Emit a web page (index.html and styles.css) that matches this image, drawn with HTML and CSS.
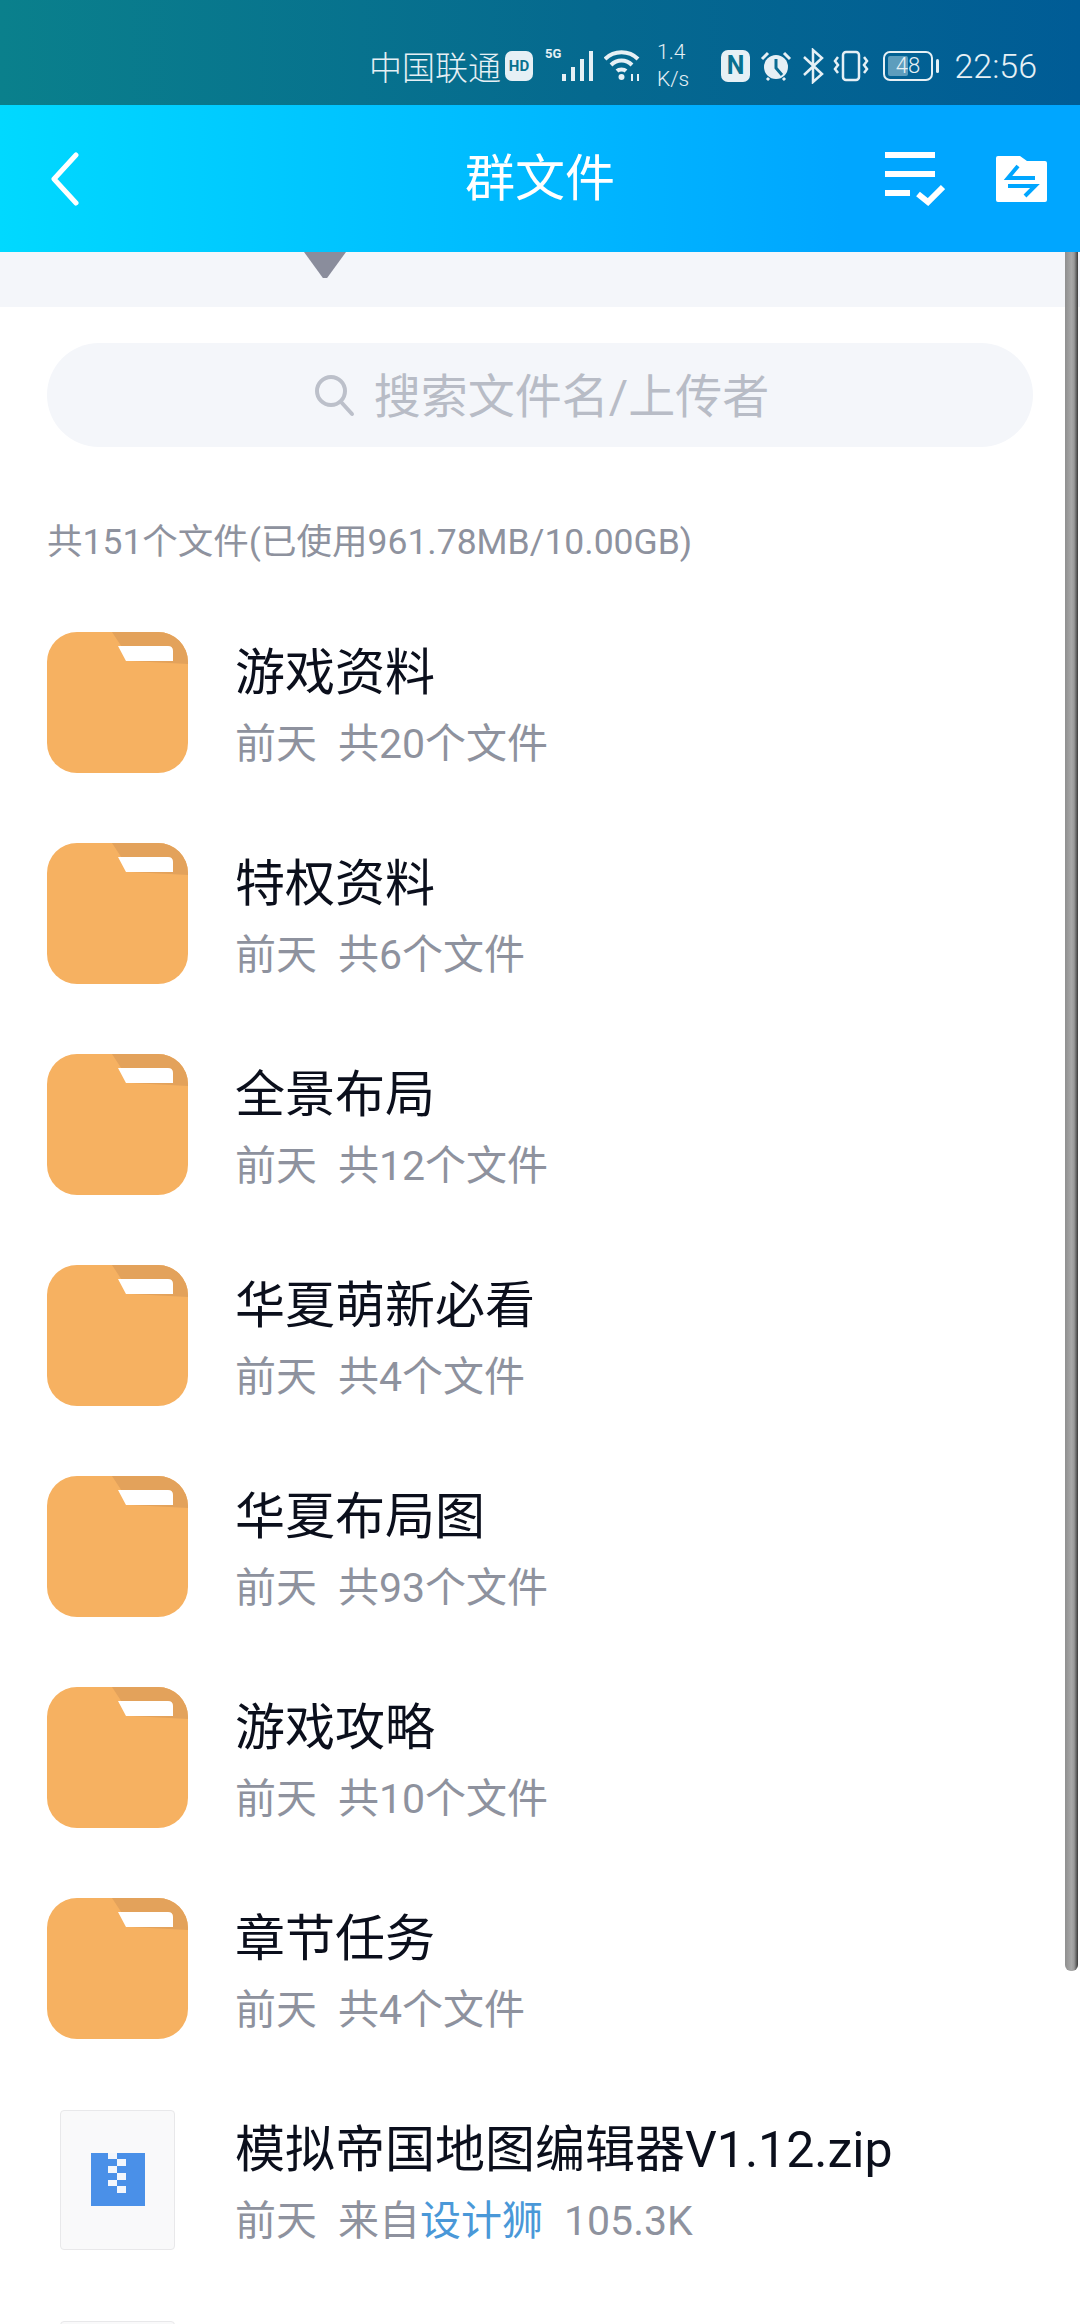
FILE: index.html
```html
<!DOCTYPE html>
<html lang="zh-CN">
<head>
    <meta charset="UTF-8">
    <meta name="viewport" content="width=device-width, initial-scale=1.0">
    <title>群文件</title>
    <link rel="stylesheet" href="styles.css">
</head>
<body>
    <svg class="svg-defs" width="0" height="0">
        <defs>
            <g id="folder">
                <rect width="141" height="141" rx="30" fill="#f6b161"/>
                <path d="M65 0H111A30 30 0 0 1 141 30V32L84 29Z" fill="#e3a25b"/>
                <path d="M71 14H121Q126 14 126 19V29H79Z" fill="#fff"/>
            </g>
        </defs>
    </svg>

    <div class="status-bar">
        <span class="carrier">中国联通</span>
        <span class="hd">HD</span>
        <span class="signal">
            <span class="five-g">5G</span>
            <svg width="32" height="32" viewBox="0 0 32 32" fill="#e6f0f5">
                <rect x="0" y="24" width="4" height="7"/>
                <rect x="9" y="17" width="4" height="14"/>
                <rect x="18" y="9" width="4" height="22"/>
                <rect x="27" y="1" width="4" height="30"/>
            </svg>
        </span>
        <svg class="wifi" width="38" height="32" viewBox="0 0 38 32" fill="none" stroke="#e6f0f5" stroke-width="4">
            <path d="M1 9C10 0 25 0 34 9"/>
            <path d="M7 15C13 9 22 9 28 15"/>
            <path d="M13 21C15 19 20 19 22 21"/>
            <circle cx="17.5" cy="27" r="3" fill="#e6f0f5" stroke="none"/>
            <path d="M28 24v7M34 24v7" stroke-width="2"/>
        </svg>
        <span class="speed">1.4<br>K/s</span>
        <span class="nfc">N</span>
        <svg class="alarm" width="32" height="32" viewBox="0 0 32 32">
            <circle cx="16" cy="17" r="12" fill="#e6f0f5"/>
            <path d="M16 9V18L22 25" fill="none" stroke="#0a6c93" stroke-width="3"/>
            <path d="M2 9L8 3M30 9L24 3M7 30L9 28M25 30L23 28" stroke="#e6f0f5" stroke-width="3"/>
        </svg>
        <svg class="bluetooth" width="22" height="36" viewBox="0 0 22 36" fill="none" stroke="#e6f0f5" stroke-width="2.5">
            <path d="M2 9L20 26L11 34V2L20 10L2 27"/>
        </svg>
        <svg class="vibrate" width="36" height="32" viewBox="0 0 36 32" fill="none" stroke="#e6f0f5" stroke-width="2.5">
            <rect x="10" y="2" width="16" height="28" rx="3"/>
            <path d="M5 7L2 11L5 15L2 19L5 23M31 7L34 11L31 15L34 19L31 23"/>
        </svg>
        <span class="battery">
            <span class="battery-body">
                <span class="battery-fill"></span>
                <span class="battery-num">48</span>
            </span>
            <span class="battery-nub"></span>
        </span>
        <span class="clock">22:56</span>
    </div>

    <header class="title-bar">
        <div class="title-left">
            <svg width="30" height="54" viewBox="0 0 30 54" fill="none" stroke="#fff" stroke-width="5" stroke-linecap="round" stroke-linejoin="round">
                <path d="M26 3L4 27L26 51"/>
            </svg>
        </div>
        <h1>群文件</h1>
        <div class="title-right">
            <svg width="60" height="54" viewBox="0 0 60 54" fill="none" stroke="#fff" stroke-width="6">
                <path d="M0 3H50M0 22H50M0 41H25"/>
                <path d="M33 42L43 50L58 35" stroke-width="6"/>
            </svg>
            <svg width="51" height="46" viewBox="0 0 51 46">
                <path d="M2 0H24L31 5H49Q51 5 51 7V44Q51 46 49 46H2Q0 46 0 44V2Q0 0 2 0Z" fill="#fff"/>
                <path d="M22 10L12 22H39M12 30H39L29 40" fill="none" stroke="#00a6ff" stroke-width="4"/>
            </svg>
        </div>
    </header>

    <div class="strip"><span class="arrow"></span></div>

    <div class="search-wrap">
        <div class="search">
            <svg width="42" height="44" viewBox="0 0 42 44" fill="none" stroke="#bcc0ca" stroke-width="4" stroke-linecap="round">
                <circle cx="18" cy="18" r="14"/>
                <path d="M29 30L39 41"/>
            </svg>
            <span class="search-text">搜索文件名/上传者</span>
        </div>
    </div>

    <div class="info">共151个文件(已使用961.78MB/10.00GB)</div>

    <ul class="list">
        <li class="row">
            <svg class="thumb" width="141" height="141" viewBox="0 0 141 141"><use href="#folder"/></svg>
            <div class="meta"><div class="name">游戏资料</div><div class="sub"><span>前天</span><span>共20个文件</span></div></div>
        </li>
        <li class="row">
            <svg class="thumb" width="141" height="141" viewBox="0 0 141 141"><use href="#folder"/></svg>
            <div class="meta"><div class="name">特权资料</div><div class="sub"><span>前天</span><span>共6个文件</span></div></div>
        </li>
        <li class="row">
            <svg class="thumb" width="141" height="141" viewBox="0 0 141 141"><use href="#folder"/></svg>
            <div class="meta"><div class="name">全景布局</div><div class="sub"><span>前天</span><span>共12个文件</span></div></div>
        </li>
        <li class="row">
            <svg class="thumb" width="141" height="141" viewBox="0 0 141 141"><use href="#folder"/></svg>
            <div class="meta"><div class="name">华夏萌新必看</div><div class="sub"><span>前天</span><span>共4个文件</span></div></div>
        </li>
        <li class="row">
            <svg class="thumb" width="141" height="141" viewBox="0 0 141 141"><use href="#folder"/></svg>
            <div class="meta"><div class="name">华夏布局图</div><div class="sub"><span>前天</span><span>共93个文件</span></div></div>
        </li>
        <li class="row">
            <svg class="thumb" width="141" height="141" viewBox="0 0 141 141"><use href="#folder"/></svg>
            <div class="meta"><div class="name">游戏攻略</div><div class="sub"><span>前天</span><span>共10个文件</span></div></div>
        </li>
        <li class="row">
            <svg class="thumb" width="141" height="141" viewBox="0 0 141 141"><use href="#folder"/></svg>
            <div class="meta"><div class="name">章节任务</div><div class="sub"><span>前天</span><span>共4个文件</span></div></div>
        </li>
        <li class="row">
            <div class="file-thumb">
                <svg width="54" height="53" viewBox="0 0 54 53">
                    <rect width="54" height="53" fill="#4a90e8"/>
                    <path d="M17 0H26V6H17ZM26 6H35V13H26ZM17 13H26V20H17ZM26 20H35V27H26ZM17 27H26V33H17ZM26 33H35V40H26Z" fill="#f2f6fc"/>
                </svg>
            </div>
            <div class="meta"><div class="name">模拟帝国地图编辑器V1.12.zip</div><div class="sub"><span>前天</span><span>来自<a class="author">设计狮</a></span><span>105.3K</span></div></div>
        </li>
        <li class="row">
            <div class="file-thumb"></div>
        </li>
    </ul>

    <div class="scrollbar"></div>
</body>
</html>
```

FILE: styles.css
```css
* {
    box-sizing: border-box;
}

html, body {
    height: 2324px;
    overflow: hidden;
}

body {
    position: relative;
    margin: 0;
    background-color: #fff;
    font-family: Roboto, "Noto Sans CJK SC", sans-serif;
}

.svg-defs {
    position: absolute;
}

/* status bar */
.status-bar {
    display: flex;
    align-items: center;
    justify-content: flex-end;
    height: 105px;
    padding: 26px 43px 0 0;
    background: linear-gradient(90deg, #0a808c, #05698f 55%, #005c96);
    color: #e6f0f5;
}

.carrier {
    font-size: 33px;
    width: 136px;
    font-weight: 300;
}

.hd {
    width: 28px;
    height: 30px;
    border-radius: 7px;
    background-color: #e6f0f5;
    color: #08708f;
    font-size: 15px;
    font-weight: 700;
    line-height: 30px;
    text-align: center;
}

.signal {
    position: relative;
    width: 49px;
    height: 32px;
    margin-left: 12px;
    display: flex;
    justify-content: flex-end;
}

.five-g {
    position: absolute;
    left: 0;
    top: -3px;
    font-size: 13px;
    font-weight: 700;
    line-height: 14px;
}

.wifi {
    margin-left: 10px;
}

.speed {
    width: 52px;
    margin-left: 15px;
    font-size: 21px;
    line-height: 27px;
    font-weight: 300;
}

.nfc {
    width: 29px;
    height: 32px;
    margin-left: 12px;
    border-radius: 7px;
    background-color: #e6f0f5;
    color: #08708f;
    font-size: 25px;
    font-weight: 700;
    line-height: 32px;
    text-align: center;
}

.alarm {
    margin-left: 10px;
}

.bluetooth {
    margin-left: 10px;
}

.vibrate {
    margin-left: 9px;
}

.battery {
    display: flex;
    align-items: center;
    gap: 3px;
    margin-left: 14px;
}

.battery-body {
    position: relative;
    width: 50px;
    height: 30px;
    border: 2px solid #e6f0f5;
    border-radius: 7px;
}

.battery-fill {
    position: absolute;
    left: 3px;
    top: 3px;
    bottom: 3px;
    width: 20px;
    background-color: #5d9dbd;
    border-radius: 2px;
}

.battery-num {
    position: absolute;
    left: 0;
    right: 0;
    top: 0;
    font-size: 22px;
    font-weight: 300;
    line-height: 26px;
    text-align: center;
}

.battery-nub {
    width: 3px;
    height: 14px;
    background-color: #e6f0f5;
    border-radius: 2px;
}

.clock {
    width: 84px;
    margin-left: 14px;
    font-size: 34px;
    font-weight: 300;
    text-align: right;
}

/* title bar */
.title-bar {
    display: grid;
    grid-template-columns: 1fr auto 1fr;
    align-items: center;
    height: 147px;
    background: linear-gradient(90deg, #00d9ff, #00bfff 40%, #00a6ff 78%);
    color: #fff;
}

.title-left {
    padding-left: 50px;
    display: flex;
}

h1 {
    margin: 0;
    font-size: 50px;
    font-weight: 400;
    line-height: 60px;
}

.title-right {
    display: flex;
    justify-content: flex-end;
    align-items: center;
    gap: 51px;
    padding-right: 33px;
}

/* grey strip under the title */
.strip {
    position: relative;
    height: 55px;
    background-color: #f4f6fa;
}

.arrow {
    position: absolute;
    left: 304px;
    top: 0;
    width: 42px;
    height: 26px;
    background-color: #8a8d9c;
    clip-path: polygon(0 0, 100% 0, 55% 100%, 45% 100%);
}

/* search */
.search-wrap {
    padding: 36px 47px 0;
}

.search {
    display: flex;
    align-items: center;
    justify-content: center;
    gap: 19px;
    height: 104px;
    padding-left: 2px;
    border-radius: 52px;
    background-color: #f4f6fa;
    color: #b8bcc6;
    font-size: 47px;
}

.search-text {
    margin-bottom: 5px;
}

.info {
    margin-top: 71px;
    margin-bottom: 31px;
    padding-left: 47px;
    color: #8e929e;
    font-size: 35.5px;
    line-height: 48px;
}

/* file list */
.list {
    list-style: none;
    margin: 0;
    padding: 0;
}

.row {
    display: flex;
    align-items: center;
    height: 211px;
    padding-left: 47px;
}

.thumb {
    flex: none;
}

.file-thumb {
    flex: none;
    display: flex;
    align-items: center;
    justify-content: center;
    width: 115px;
    height: 140px;
    margin: 0 13px;
    background-color: #f9f9fa;
    border: 1px solid #e8e8ea;
    border-radius: 4px;
}

.meta {
    margin-left: 47px;
    padding-top: 5px;
}

.name {
    color: #0b0f1c;
    font-size: 50px;
    line-height: 60px;
}

.sub {
    display: flex;
    gap: 21px;
    margin-top: 17px;
    color: #8e929e;
    font-size: 41px;
    line-height: 48px;
}

.author {
    color: #4a98d8;
}

.scrollbar {
    position: absolute;
    left: 1065px;
    top: 252px;
    width: 13px;
    height: 1719px;
    border-radius: 0 0 6px 6px;
    background: linear-gradient(90deg, #8f8f8f, #a8a8a8 50%, #9a9a9a 70%, #3a3a3a);
}
```
